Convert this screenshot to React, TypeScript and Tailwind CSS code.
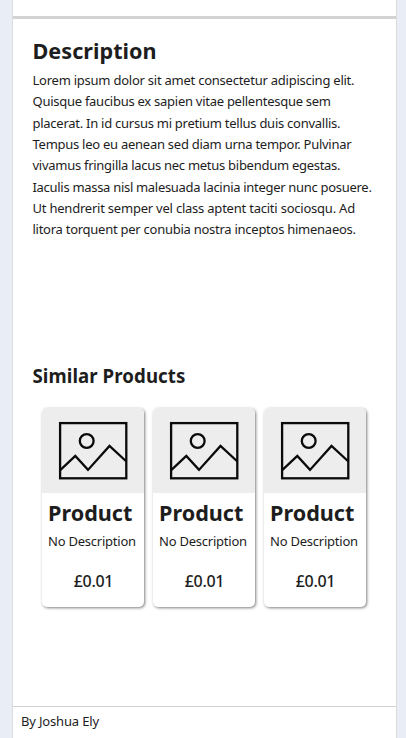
const lines = [
  { text: "Lorem ipsum dolor sit amet consectetur adipiscing elit.", tracking: "tracking-[-0.24px]" },
  { text: "Quisque faucibus ex sapien vitae pellentesque sem", tracking: "tracking-[-0.265px]" },
  { text: "placerat. In id cursus mi pretium tellus duis convallis.", tracking: "tracking-[-0.26px]" },
  { text: "Tempus leo eu aenean sed diam urna tempor. Pulvinar", tracking: "tracking-[-0.26px]" },
  { text: "vivamus fringilla lacus nec metus bibendum egestas.", tracking: "tracking-[-0.275px]" },
  { text: "Iaculis massa nisl malesuada lacinia integer nunc posuere.", tracking: "tracking-[-0.3px]" },
  { text: "Ut hendrerit semper vel class aptent taciti sociosqu. Ad", tracking: "tracking-[-0.22px]" },
  { text: "litora torquent per conubia nostra inceptos himenaeos.", tracking: "tracking-[-0.26px]" },
];

function Placeholder() {
  return (
    <svg viewBox="0 0 102 85" className="block h-[85px] w-[102px]" fill="none" stroke="#0a0a0a" strokeWidth="2.3">
      <rect x="18.1" y="15.1" width="66.2" height="55.2" />
      <circle cx="44.7" cy="33" r="6.9" />
      <path d="M18.5 61.8 L33.3 48 L46 61.9 L67.5 38 L84.4 53.5" />
    </svg>
  );
}

function ProductCard() {
  return (
    <article className="h-[199px] w-[102px] overflow-hidden rounded-[5px] bg-white shadow-[1px_1px_3px_rgba(0,0,0,0.5)]">
      <div className="bg-[#ededed]">
        <Placeholder />
      </div>
      <div className="flex flex-col pl-[6px] whitespace-nowrap">
        <h3 className="mt-[4px] h-[32px] text-[21.6px] leading-[32px] font-bold">Product</h3>
        <p className="mt-[2px] h-[21px] text-[13px] leading-[21px] tracking-[-0.23px]">No Description</p>
        <p className="mt-[16px] h-[26px] pr-[5px] text-center text-[16px] leading-[26px] font-medium tracking-[-0.3px]">£0.01</p>
      </div>
    </article>
  );
}

export default function App() {
  return (
    <div className="h-[738px] w-[406px] overflow-hidden bg-[#e8edf6] pl-[12px] font-['Noto_Sans',sans-serif] text-[#1d1d1d]">
      <div className="flex h-full w-[385px] flex-col border-x border-[#dcdcdc] bg-white">
        <div className="h-[19px] shrink-0 border-b-[3px] border-[#d3d3d3]" />
        <main className="h-[687px] shrink-0 pl-[19px]">
          <h1 className="pt-[16px] pl-[0.5px] text-[21.6px] leading-[32px] font-bold tracking-[0.03px]">Description</h1>
          <div className="mt-[3px] h-[171px] pl-[0.5px] text-[13px] leading-[21.33px] whitespace-nowrap">
            {lines.map((line) => (
              <p key={line.text} className={line.tracking}>{line.text}</p>
            ))}
          </div>
          <h2 className="mt-[121px] pl-[0.5px] text-[18.67px] leading-[28px] font-bold tracking-[0.07px]">Similar Products</h2>
          <div className="mt-[18px] flex gap-[9px] pl-[10px]">
            <ProductCard />
            <ProductCard />
            <ProductCard />
          </div>
        </main>
        <footer className="flex-1 border-t border-[#d3d3d3] pt-[4px] pl-[8px] text-[13px] leading-[21px] tracking-[-0.17px]">By Joshua Ely</footer>
      </div>
    </div>
  );
}
